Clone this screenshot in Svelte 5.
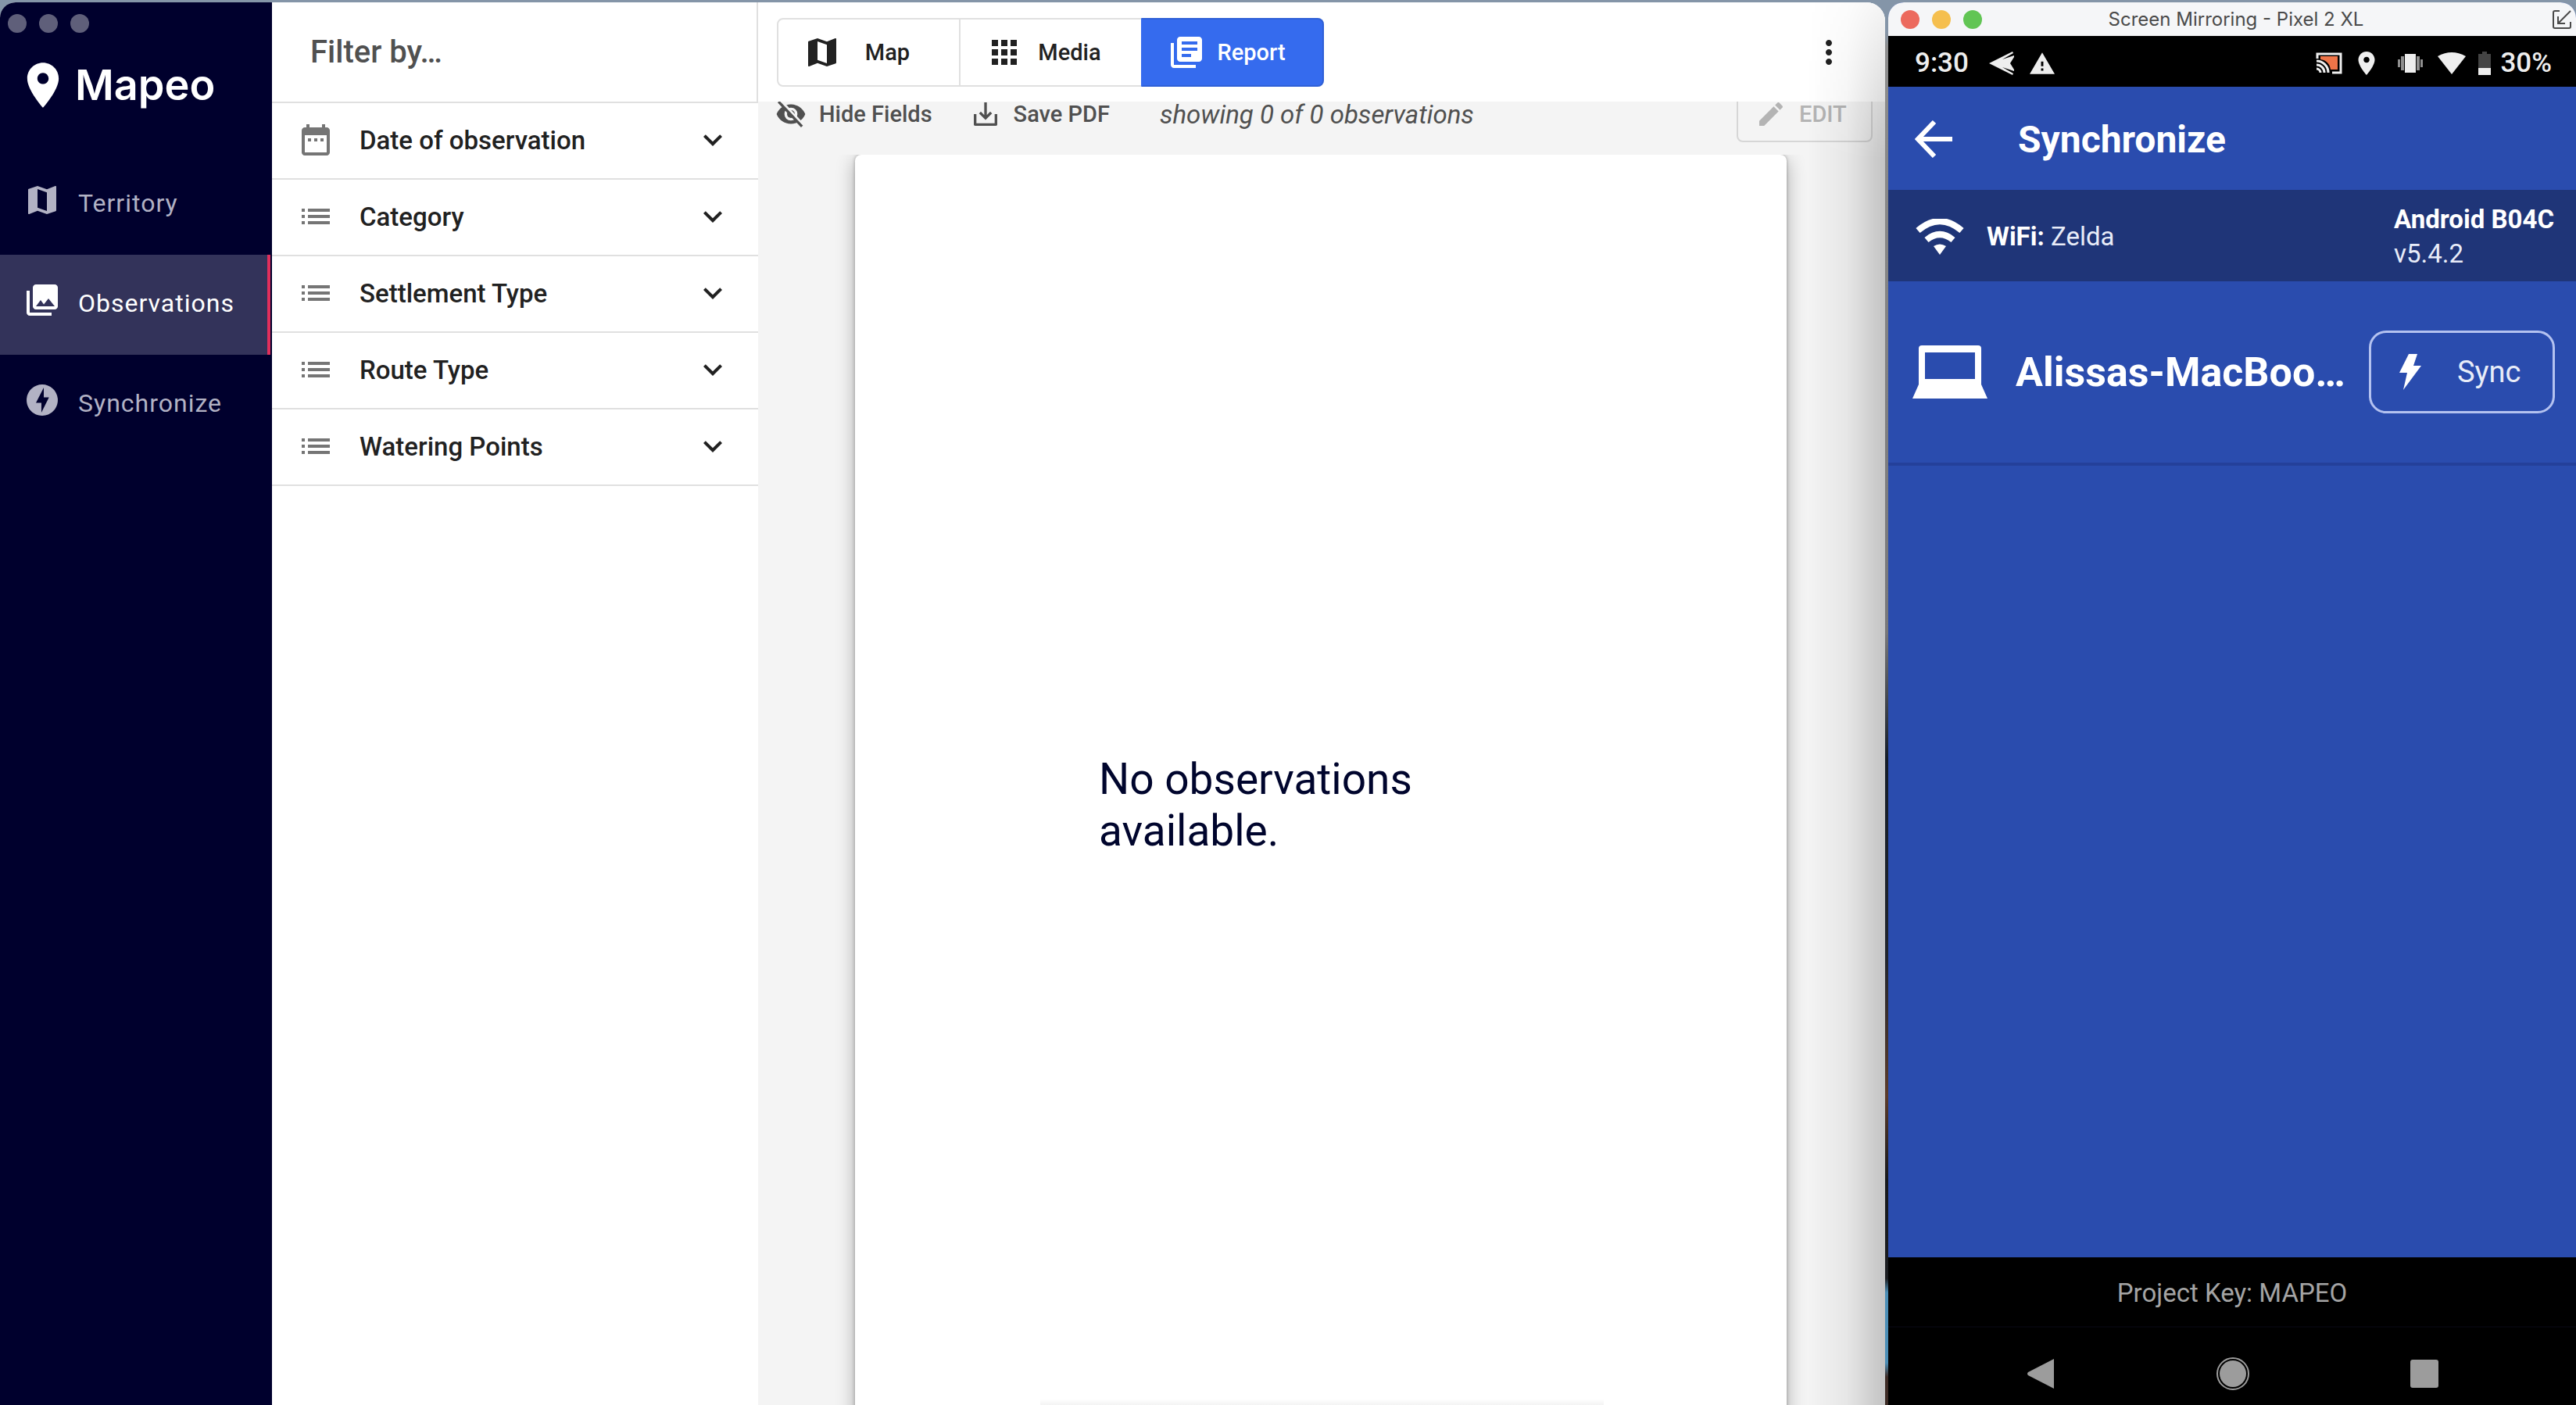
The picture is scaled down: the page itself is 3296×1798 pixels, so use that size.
<script>
  const nav = [
    { label: 'Territory', icon: 'map' },
    { label: 'Observations', icon: 'photos', active: true },
    { label: 'Synchronize', icon: 'bolt' }
  ];
  const filters = [
    { label: 'Date of observation', icon: 'calendar' },
    { label: 'Category', icon: 'list' },
    { label: 'Settlement Type', icon: 'list' },
    { label: 'Route Type', icon: 'list' },
    { label: 'Watering Points', icon: 'list' }
  ];
  const views = [
    { label: 'Map', icon: 'map' },
    { label: 'Media', icon: 'grid' },
    { label: 'Report', icon: 'report', active: true }
  ];
  const paths = {
    map: 'M20.5 3l-.16.03L15 5.1 9 3 3.36 4.9c-.21.07-.36.25-.36.48V20.5c0 .28.22.5.5.5l.16-.03L9 18.9l6 2.1 5.64-1.9c.21-.07.36-.25.36-.48V3.5c0-.28-.22-.5-.5-.5zM15 19l-6-2.11V5l6 2.11V19z',
    photos: 'M22 16V4c0-1.100-.9-2-2-2H8c-1.100 0-2 .9-2 2v12c0 1.100.9 2 2 2h12c1.100 0 2-.9 2-2zm-11-4l2.030 2.710L16 11l4 5H8l3-4zM2 6v14c0 1.100.9 2 2 2h14v-2H4V6H2z',
    bolt: 'M12 2.020c-5.510 0-9.980 4.470-9.980 9.980s4.470 9.980 9.980 9.980 9.980-4.470 9.980-9.980S17.510 2.020 12 2.020zM11.480 20v-6.260H8L13 4v6.260h3.350L11.480 20z',
    calendar: 'M9 11H7v2h2v-2zm4 0h-2v2h2v-2zm4 0h-2v2h2v-2zm2-7h-1V2h-2v2H8V2H6v2H5c-1.110 0-1.990.9-1.990 2L3 20c0 1.100.890 2 2 2h14c1.100 0 2-.9 2-2V6c0-1.100-.9-2-2-2zm0 16H5V9h14v11z',
    list: 'M3 13h2v-2H3v2zm0 4h2v-2H3v2zm0-8h2V7H3v2zm4 4h14v-2H7v2zm0 4h14v-2H7v2zM7 7v2h14V7H7z',
    grid: 'M4 8h4V4H4v4zm6 12h4v-4h-4v4zm-6 0h4v-4H4v4zm0-6h4v-4H4v4zm6 0h4v-4h-4v4zm6-10v4h4V4h-4zm-6 4h4V4h-4v4zm6 6h4v-4h-4v4zm0 6h4v-4h-4v4z',
    report: 'M4 6H2v14c0 1.100.9 2 2 2h14v-2H4V6zm16-4H8c-1.100 0-2 .9-2 2v12c0 1.100.9 2 2 2h12c1.100 0 2-.9 2-2V4c0-1.100-.9-2-2-2zm-1 9H9V9h10v2zm-4 4H9v-2h6v2zm4-8H9V5h10v2z',
    chevron: 'M16.590 8.590L12 13.170 7.410 8.590 6 10l6 6 6-6z',
    more: 'M12 8c1.100 0 2-.9 2-2s-.9-2-2-2-2 .9-2 2 .9 2 2 2zm0 2c-1.100 0-2 .9-2 2s.9 2 2 2 2-.9 2-2-.9-2-2-2zm0 6c-1.100 0-2 .9-2 2s.9 2 2 2 2-.9 2-2-.9-2-2-2z',
    edit: 'M3 17.250V21h3.750L17.810 9.940l-3.750-3.750L3 17.250zM20.710 7.040c.390-.390.390-1.020 0-1.410l-2.340-2.340c-.390-.390-1.020-.390-1.410 0l-1.830 1.830 3.750 3.750 1.830-1.830z',
    pin: 'M12 2C8.130 2 5 5.130 5 9c0 5.250 7 13 7 13s7-7.750 7-13c0-3.870-3.130-7-7-7zm0 9.500c-1.380 0-2.500-1.120-2.500-2.500s1.120-2.500 2.500-2.500 2.500 1.120 2.500 2.500-1.120 2.500-2.500 2.500z',
    save: 'M19 12v7H5v-7H3v8c0 .6.4 1 1 1h16c.6 0 1-.4 1-1v-8h-2zM13 3h-2v9.700L8.400 10.100 7 11.500l5 5 5-5-1.400-1.400L13 12.700V3z',
    warning: 'M1 21h22L12 2 1 21zm12-3h-2v-2h2v2zm0-4h-2v-4h2v4z'
  };
</script>

{#snippet icon(name)}
  <svg class="icon" viewBox="0 0 24 24" aria-hidden="true"><path d={paths[name]} /></svg>
{/snippet}

<div class="desktop">
  <div class="mapeo">
    <aside class="sidebar">
      <div class="dots"><i></i><i></i><i></i></div>
      <div class="brand">
        <svg viewBox="4 1 16 22" aria-hidden="true"><path d={paths.pin} /></svg>
        <span>Mapeo</span>
      </div>
      <nav>
        {#each nav as item}
          <a href="#{item.label.toLowerCase()}" class:active={item.active}>
            {@render icon(item.icon)}<span>{item.label}</span>
          </a>
        {/each}
      </nav>
    </aside>

    <section class="filters">
      <h2>Filter by…</h2>
      {#each filters as f}
        <button class="filter">
          {@render icon(f.icon)}<span>{f.label}</span>{@render icon('chevron')}
        </button>
      {/each}
    </section>

    <main>
      <header class="topbar">
        <div class="views">
          {#each views as v}
            <button class:active={v.active}>{@render icon(v.icon)}<span>{v.label}</span></button>
          {/each}
        </div>
        <button class="more" aria-label="More options">{@render icon('more')}</button>
      </header>
      <div class="actions">
        <button class="action">
          <svg class="icon" viewBox="0 0 24 24" aria-hidden="true">
            <path fill-rule="evenodd" d="M12 4.500C7 4.500 2.700 7.600 1 12c1.700 4.400 6 7.500 11 7.500s9.300-3.100 11-7.500c-1.700-4.400-6-7.500-11-7.500zM12 17a5 5 0 1 1 0-10 5 5 0 0 1 0 10z" />
            <circle cx="12" cy="12" r="3" />
            <path class="gap" d="M4.500 2L22 21" />
            <path class="slash" d="M2.500 2.500L20.500 21.500" />
          </svg>
          Hide Fields
        </button>
        <button class="action">{@render icon('save')}Save PDF</button>
        <em>showing 0 of 0 observations</em>
        <button class="edit" disabled>{@render icon('edit')}EDIT</button>
      </div>
      <div class="scroll">
        <article class="paper"><p>No observations available.</p></article>
      </div>
      <div class="shade"></div>
    </main>
  </div>

  <div class="phone">
    <div class="titlebar">
      <div class="lights"><i class="red"></i><i class="yellow"></i><i class="green"></i></div>
      <span>Screen Mirroring - Pixel 2 XL</span>
      <svg viewBox="0 0 24 24" aria-hidden="true"><path d="M9 1H3q-2 0-2 2v18q0 2 2 2h18q2 0 2-2v-6M23 1L7 17M7 8v9h9" /></svg>
    </div>
    <div class="status">
      <span>9:30</span>
      <svg class="send" viewBox="0 0 34 30" aria-hidden="true"><path d="M0 15L30 0l1 2-14 8 15-5v2l-5 8 5 8v2l-15-5 14 8-1 2z" /></svg>
      <svg class="warn" viewBox="1 2 22 19" aria-hidden="true"><path d={paths.warning} /></svg>
      <svg class="cast" viewBox="0 0 34 28" aria-hidden="true">
        <path class="screen" d="M6 5h22v17h-9C18 14 13 10 6 9z" />
        <path class="line" d="M2 8V2h30v24H21M1 11a15 15 0 0 1 15 15M1 16a10 10 0 0 1 10 10M1 21a5 5 0 0 1 5 5" />
      </svg>
      <svg class="loc" viewBox="5 2 14 20" aria-hidden="true"><path d={paths.pin} /></svg>
      <svg class="vibrate" viewBox="0 0 34 26" aria-hidden="true"><path d="M10 1h14v24H10z" /><path class="waves" d="M5 4h4v18H5zM25 4h4v18h-4zM1 8h3v10H1zM30 8h3v10h-3z" /></svg>
      <svg class="signal" viewBox="0 0 36 28" aria-hidden="true"><path d="M0 5Q18-5 36 5L18 28z" /></svg>
      <svg class="battery" viewBox="0 0 16 30" aria-hidden="true"><path class="empty" d="M5 0h6v3h5v18H0V3h5z" /><path d="M0 21h16v9H0z" /></svg>
      <span>30%</span>
    </div>
    <div class="appbar">
      <button aria-label="Back"><svg viewBox="0 0 48 48" aria-hidden="true"><path d="M25 2L4 24l21 22M4 24h44" /></svg></button>
      <h1>Synchronize</h1>
    </div>
    <div class="wifi">
      <svg viewBox="0 0 64 46" aria-hidden="true">
        <path class="arc" d="M4 15Q32-9 60 15M15 27q17-14 34 0" /><path d="M24 35q8-5 16 0l-8 11z" />
      </svg>
      <p><b>WiFi:</b> Zelda</p>
      <p class="device"><b>Android B04C</b><br />v5.4.2</p>
    </div>
    <div class="peer">
      <svg viewBox="0 0 96 68" aria-hidden="true"><path fill-rule="evenodd" d="M12 0h72q4 0 4 4v46l8 18H0l8-18V4q0-4 4-4zM16 9v34h64V9z" /></svg>
      <strong>Alissas-MacBoo…</strong>
      <button><svg viewBox="0 0 28 46" aria-hidden="true"><path d="M12 0h11l-5 15h10L5 46l5-22H0z" /></svg>Sync</button>
    </div>
    <div class="blank"></div>
    <footer>Project Key: MAPEO</footer>
    <div class="keys">
      <button aria-label="Back"><svg viewBox="0 0 44 44" aria-hidden="true"><path d="M38 3v38L5 24q-2-2 0-4z" /></svg></button>
      <button aria-label="Home"><svg viewBox="0 0 44 44" aria-hidden="true"><circle cx="22" cy="22" r="17" /><circle class="ring" cx="22" cy="22" r="20" /></svg></button>
      <button aria-label="Recent apps"><svg viewBox="0 0 44 44" aria-hidden="true"><rect x="4" y="4" width="36" height="36" rx="3" /></svg></button>
    </div>
  </div>
</div>

<style>
  :global(body) { font-family: Roboto, sans-serif; }
  * { box-sizing: border-box; }
  button { font: inherit; color: inherit; background: none; border: 0; padding: 0; display: flex; align-items: center; }
  h1, h2, p { margin: 0; font-size: inherit; font-weight: inherit; }
  svg { display: block; flex: none; fill: currentColor; }
  .icon { width: 48px; height: 48px; }

  .desktop {
    display: grid; grid-template: minmax(0, 1fr) / minmax(0, 2412fr) minmax(0, 880fr); column-gap: 4px;
    height: 100vh; padding-top: 3px; overflow: hidden;
    background: linear-gradient(#8495a8 0, #8495a8 40px, #8c8c8c 60px, #77777a 45%, #141c28 54%, #20242c 68%, #5b3b2b 78%, #16181c 84%, #1a1c20 91%, #4a8db5 92%, #4a8db5 97%, #3c2a24 98%);
  }
  .mapeo {
    display: grid; grid-template: minmax(0, 1fr) / 348px 622px minmax(0, 1fr);
    overflow: hidden; border-radius: 20px 24px 0 0; background: #fff;
  }

  .sidebar { background: #00002d; color: #b2b2c4; }
  .dots { display: flex; gap: 16px; padding: 15px 10px 0; }
  .dots i { width: 24px; height: 24px; border-radius: 50%; background: #5f5f7a; }
  .brand { display: flex; align-items: center; height: 156px; padding: 0 0 22px 32px; color: #fff; font: 600 54px/64px Inter, sans-serif; }
  .brand svg { width: 46px; height: 64px; }
  .brand span { margin-left: 18px; }
  nav a {
    display: flex; align-items: center; height: 128px; margin-right: 2px; padding: 0 0 4px 30px; gap: 22px;
    color: inherit; text-decoration: none; font-size: 32px; line-height: 40px; letter-spacing: 1px;
  }
  nav a .icon { margin-bottom: 8px; }
  nav a.active { background: #33335a; color: #fff; border-right: 4px solid #e12f5c; }

  .filters { padding-right: 0; }
  .filters h2 { height: 129px; padding-left: 49px; font-size: 40px; line-height: 128px; font-weight: 500; color: #505050; border: solid #e0e0e0; border-width: 0 2px 2px 0; }
  .filter {
    width: 100%; height: 98px; padding: 0 34px 2px 32px; border-bottom: 2px solid #e0e0e0;
    font-size: 33px; font-weight: 500; color: #757575;
  }
  .filter span { flex: 1; margin-left: 32px; text-align: left; color: #212121; }
  .filter .icon:last-child { color: #212121; }

  main { display: flex; flex-direction: column; min-width: 0; position: relative; background: #f4f4f4; color: #505050; }
  .topbar { display: flex; align-items: center; justify-content: space-between; flex: none; height: 127px; padding: 0 48px 0 24px; background: #fff; color: #212121; z-index: 1; }
  .views { display: flex; height: 88px; border: 2px solid #e0e0e0; border-radius: 8px; font-size: 29px; font-weight: 500; }
  .views button { width: 231px; padding: 0 32px; }
  .views button + button { width: 233px; border-left: 2px solid #e0e0e0; }
  .views span { flex: 1; text-align: center; }
  .views button.active { width: 234px; margin: -2px -2px -2px 0; background: #356bee; color: #fff; border: 2px solid #2f60d6; border-left-color: #356bee; border-radius: 0 8px 8px 0; }
  .actions { display: flex; align-items: center; flex: none; height: 72px; margin: -20px 16px 16px 22px; font-size: 29px; font-weight: 500; }
  .actions .icon { width: 40px; height: 40px; }
  .action { gap: 16px; margin-right: 48px; }
  .gap { stroke: #f4f4f4; stroke-width: 2; }
  .slash { stroke: currentColor; stroke-width: 2; }
  em { flex: 1; margin-left: 16px; font-size: 33px; font-weight: 400; }
  .edit { width: 174px; height: 72px; gap: 16px; padding-left: 22px; border: 2px solid #d6d6d6; border-radius: 8px; color: #b4b4b4; }
  .scroll { flex: 1; min-height: 0; padding-right: 2px; overflow: hidden; position: relative; }
  .scroll::after {
    content: ''; position: absolute; bottom: 0; left: 25%; right: 25%; height: 8px;
    background: linear-gradient(#fff, #f3f3f3);
  }
  .paper { width: 1192px; height: 1664px; margin: 0 auto; display: grid; place-items: center; background: #fff; border-radius: 8px; box-shadow: 0 6px 24px rgba(0, 0, 0, .3), 0 0 4px rgba(0, 0, 0, .3); }
  .paper p { width: 568px; font-size: 55px; line-height: 66px; color: #00052d; }
  .shade { position: absolute; z-index: 2; top: 0; right: 0; bottom: 0; width: 100px; pointer-events: none; background: linear-gradient(to right, transparent, rgba(0, 0, 0, .05) 50%, rgba(0, 0, 0, .2)); mask-image: linear-gradient(rgba(0, 0, 0, .2), #000 200px); }

  .phone { display: flex; flex-direction: column; min-width: 0; overflow: hidden; border-radius: 20px 20px 0 0; background: #2a4cae; color: #fff; }
  .titlebar { display: grid; grid-template-columns: 1fr auto 1fr; align-items: center; height: 43px; padding: 0 6px 0 16px; background: #f5f6f8; color: #4a4a4a; font: 24px Inter, sans-serif; }
  .titlebar svg { justify-self: end; width: 24px; height: 24px; fill: none; stroke: currentColor; stroke-width: 2; }
  .lights { display: flex; gap: 16px; }
  .lights i { width: 24px; height: 24px; border-radius: 50%; }
  .red { background: #ec6a5e; }
  .yellow { background: #f5bf4f; }
  .green { background: #61c554; }
  .status { display: flex; align-items: center; height: 65px; padding: 4px 31px 0 34px; background: #000; font-size: 35px; font-weight: 500; color: #eee; }
  .send { width: 34px; height: 30px; margin-left: 26px; }
  .warn { width: 32px; height: 28px; margin-left: 18px; }
  .cast { width: 34px; height: 28px; margin-left: auto; }
  .screen { fill: #ee7448; }
  .line { fill: none; stroke: #eee; stroke-width: 3; }
  .loc { width: 22px; height: 30px; margin-left: 20px; }
  .vibrate { width: 34px; height: 26px; margin-left: 28px; }
  .waves { opacity: .6; }
  .signal { width: 36px; height: 28px; margin-left: 18px; }
  .battery { width: 16px; height: 30px; margin: 0 12px 0 16px; }
  .empty { fill: #444; }
  .appbar { display: flex; align-items: center; height: 132px; padding: 2px 0 0 34px; gap: 84px; font-size: 48px; font-weight: 700; }
  .appbar svg { width: 48px; height: 48px; fill: none; stroke: #fff; stroke-width: 6; }
  .wifi { display: flex; align-items: center; height: 117px; padding: 2px 28px 0 34px; gap: 28px; background: #1f3578; font-size: 33px; line-height: 44px; color: #e8ecf8; }
  .wifi svg { width: 64px; height: 46px; fill: #fff; }
  .wifi b { color: #fff; }
  .arc { fill: none; stroke: #fff; stroke-width: 8; }
  .device { margin-left: auto; }
  .peer { display: flex; align-items: center; height: 236px; padding: 0 27px 0 31px; border-bottom: 4px solid #24409a; }
  .peer svg { width: 96px; height: 68px; }
  .peer strong { flex: 1; min-width: 0; margin: 0 16px 0 36px; font-size: 52px; overflow: hidden; white-space: nowrap; text-overflow: ellipsis; }
  .peer button { width: 238px; height: 106px; gap: 46px; padding-left: 36px; border: 3px solid #b4c2f0; border-radius: 22px; font-size: 38px; color: #e8ecf8; }
  .peer button svg { width: 28px; height: 46px; fill: #fff; }
  .blank { flex: 1; }
  footer { height: 90px; line-height: 92px; background: #000; color: #a4a4a4; text-align: center; font-size: 33px; border-bottom: 2px solid #05050b; }
  .keys { display: flex; align-items: center; justify-content: center; gap: 201px; height: 99px; padding: 18px 0 0 2px; background: #000; color: #9c9c9c; }
  .keys svg { width: 44px; height: 44px; }
  .ring { fill: none; stroke: currentColor; stroke-width: 2; }
</style>
